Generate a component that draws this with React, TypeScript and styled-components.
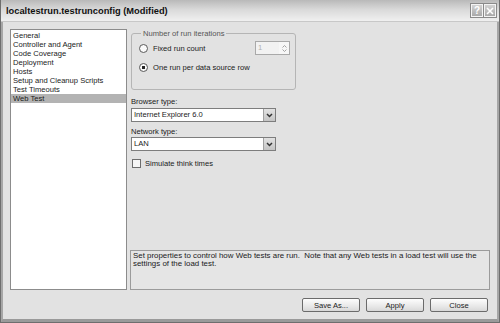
import React from 'react';
import styled, { createGlobalStyle } from 'styled-components';

const GlobalStyle = createGlobalStyle`
  html, body {
    margin: 0;
    padding: 0;
    background: #ffffff;
  }
  body {
    font-family: "Liberation Sans", Arial, sans-serif;
  }
`;

const Window = styled.div`
  width: 500px;
  height: 323px;
  box-sizing: border-box;
  display: flex;
  flex-direction: column;
  background: #e2e2e2;
  border: 1px solid #6e6e6e;
  border-top: none;
  overflow: hidden;
  color: #1a1a1a;
  font-size: 7.6px;
`;

const TitleBar = styled.div`
  height: 21px;
  flex-shrink: 0;
  display: flex;
  align-items: center;
  padding: 0 3px 0 5px;
  background: linear-gradient(#b9b9b9 0%, #d9d9d9 45%, #f0f0f0 100%);
  border-bottom: 1px solid #c8c8c8;
`;

const Title = styled.div`
  flex: 1;
  font-weight: bold;
  font-size: 9.3px;
  color: #111;
`;

const TitleButtons = styled.div`
  display: flex;
  gap: 1px;
`;

const CaptionButton = styled.div`
  width: 12px;
  height: 13px;
  box-sizing: border-box;
  display: flex;
  align-items: center;
  justify-content: center;
  border: 1px solid #f4f4f4;
  outline: 1px solid #8a8a8a;
  background: linear-gradient(#d2d2d2, #a9a9a9);
  color: #fff;
  font-weight: bold;
  font-size: 10px;
`;

const Frame = styled.div`
  flex: 1;
  display: flex;
  flex-direction: column;
  border-left: 2px solid #a6a6a6;
  border-right: 2px solid #a6a6a6;
  border-bottom: 3px solid #9a9a9a;
`;

const Body = styled.div`
  flex: 1;
  display: flex;
  flex-direction: column;
  padding: 7px 7px 0 7px;
`;

const Main = styled.div`
  height: 261px;
  display: flex;
  gap: 3px;
`;

const NavList = styled.div`
  width: 117px;
  box-sizing: border-box;
  background: #ffffff;
  border: 1px solid #8c8c8c;
  padding-top: 1px;
`;

const NavItem = styled.div<{ $selected?: boolean }>`
  height: 9px;
  line-height: 9px;
  padding-left: 2px;
  white-space: nowrap;
  background: ${p => (p.$selected ? '#b3b3b3' : 'transparent')};
`;

const Panel = styled.div`
  flex: 1;
  display: flex;
  flex-direction: column;
`;

const Upper = styled.div`
  display: flex;
  flex-direction: column;
  padding-left: 1px;
`;

const GroupBox = styled.fieldset`
  width: 165px;
  height: 61px;
  box-sizing: border-box;
  margin: 0;
  padding: 3px 5px 0 7px;
  border: 1px solid #b5b5b5;
  border-radius: 3px;
  display: flex;
  flex-direction: column;
  gap: 5px;
`;

const Legend = styled.legend`
  padding: 0 2px;
  margin-left: 2px;
  line-height: 9px;
  color: #555;
`;

const OptionRow = styled.div`
  height: 14px;
  display: flex;
  align-items: center;
`;

const Radio = styled.span<{ $checked?: boolean }>`
  width: 9px;
  height: 9px;
  box-sizing: border-box;
  border-radius: 50%;
  border: 1px solid #5a5a5a;
  background: ${p =>
    p.$checked
      ? 'radial-gradient(circle, #222 0 1.4px, #fafafa 1.9px)'
      : '#fafafa'};
  flex-shrink: 0;
`;

const OptionText = styled.span`
  margin-left: 5px;
`;

const SpinBox = styled.div`
  margin-left: auto;
  width: 35px;
  height: 14px;
  box-sizing: border-box;
  border: 1px solid #a9a9a9;
  background: #f2f2f2;
  display: flex;
`;

const SpinValue = styled.span`
  flex: 1;
  color: #b0b0b0;
  line-height: 12px;
  padding-left: 2px;
`;

const SpinArrows = styled.div`
  width: 10px;
  display: flex;
  flex-direction: column;
  align-items: center;
  justify-content: center;
  gap: 1px;
  background: #f7f7f7;
`;

const FieldLabel = styled.div<{ $top: number }>`
  margin-top: ${p => p.$top}px;
  line-height: 9px;
`;

const Select = styled.div<{ $top: number }>`
  margin-top: ${p => p.$top}px;
  width: 145px;
  height: 14px;
  box-sizing: border-box;
  border: 1px solid #7d7d7d;
  background: #fff;
  display: flex;
`;

const SelectValue = styled.span`
  flex: 1;
  line-height: 12px;
  padding-left: 2px;
`;

const SelectButton = styled.span`
  width: 11px;
  display: flex;
  align-items: center;
  justify-content: center;
  background: linear-gradient(#e2e2e2, #c4c4c4);
  border-left: 1px solid #a0a0a0;
`;

const CheckRow = styled.div`
  margin-top: 8px;
  display: flex;
  align-items: center;
  padding-left: 1px;
`;

const CheckBox = styled.span`
  width: 9px;
  height: 9px;
  box-sizing: border-box;
  border: 1px solid #6d6d6d;
  background: #f6f6f6;
`;

const CheckText = styled.span`
  margin-left: 4px;
`;

const Spacer = styled.div`
  flex: 1;
`;

const Description = styled.div`
  height: 40px;
  box-sizing: border-box;
  border: 1px solid #9b9b9b;
  background: #e5e5e5;
  padding: 1px 2px;
  line-height: 8px;
  font-size: 7.9px;
`;

const Footer = styled.div`
  display: flex;
  justify-content: flex-end;
  gap: 6px;
  margin-top: 8px;
  padding-right: 2px;
`;

const Button = styled.div`
  width: 58px;
  height: 14px;
  box-sizing: border-box;
  border: 1px solid #6b6b6b;
  border-radius: 2px;
  background: linear-gradient(#fdfdfd, #e8e8e8 60%, #d8d8d8);
  display: flex;
  align-items: center;
  justify-content: center;
`;

const Chevron = () => (
  <svg width="7" height="5" viewBox="0 0 7 5">
    <path d="M1 1 L3.5 3.5 L6 1" fill="none" stroke="#333" strokeWidth="1.5" />
  </svg>
);

const SpinArrow = ({ up }: { up?: boolean }) => (
  <svg width="5" height="3" viewBox="0 0 5 3">
    <path d={up ? 'M0.5 2.5 L2.5 0.5 L4.5 2.5' : 'M0.5 0.5 L2.5 2.5 L4.5 0.5'} fill="none" stroke="#9a9a9a" strokeWidth="0.9" />
  </svg>
);

const navItems = [
  'General',
  'Controller and Agent',
  'Code Coverage',
  'Deployment',
  'Hosts',
  'Setup and Cleanup Scripts',
  'Test Timeouts',
  'Web Test',
];

export default function App() {
  return (
    <>
      <GlobalStyle />
      <Window>
        <TitleBar>
          <Title>localtestrun.testrunconfig (Modified)</Title>
          <TitleButtons>
            <CaptionButton>?</CaptionButton>
            <CaptionButton>
              <svg width="8" height="8" viewBox="0 0 8 8">
                <path d="M1 1 L7 7 M7 1 L1 7" stroke="#fff" strokeWidth="1.6" />
              </svg>
            </CaptionButton>
          </TitleButtons>
        </TitleBar>
        <Frame>
          <Body>
            <Main>
              <NavList>
                {navItems.map(item => (
                  <NavItem key={item} $selected={item === 'Web Test'}>
                    {item}
                  </NavItem>
                ))}
              </NavList>
              <Panel>
                <Upper>
                  <GroupBox>
                    <Legend>Number of run iterations</Legend>
                    <OptionRow>
                      <Radio />
                      <OptionText>Fixed run count</OptionText>
                      <SpinBox>
                        <SpinValue>1</SpinValue>
                        <SpinArrows>
                          <SpinArrow up />
                          <SpinArrow />
                        </SpinArrows>
                      </SpinBox>
                    </OptionRow>
                    <OptionRow>
                      <Radio $checked />
                      <OptionText>One run per data source row</OptionText>
                    </OptionRow>
                  </GroupBox>
                  <FieldLabel $top={7}>Browser type:</FieldLabel>
                  <Select $top={2}>
                    <SelectValue>Internet Explorer 6.0</SelectValue>
                    <SelectButton>
                      <Chevron />
                    </SelectButton>
                  </Select>
                  <FieldLabel $top={5}>Network type:</FieldLabel>
                  <Select $top={1}>
                    <SelectValue>LAN</SelectValue>
                    <SelectButton>
                      <Chevron />
                    </SelectButton>
                  </Select>
                  <CheckRow>
                    <CheckBox />
                    <CheckText>Simulate think times</CheckText>
                  </CheckRow>
                </Upper>
                <Spacer />
                <Description>
                  Set properties to control how Web tests are run.&nbsp; Note that any Web tests in a load test will use the settings of the load test.
                </Description>
              </Panel>
            </Main>
            <Footer>
              <Button>Save As...</Button>
              <Button>Apply</Button>
              <Button>Close</Button>
            </Footer>
          </Body>
        </Frame>
      </Window>
    </>
  );
}
